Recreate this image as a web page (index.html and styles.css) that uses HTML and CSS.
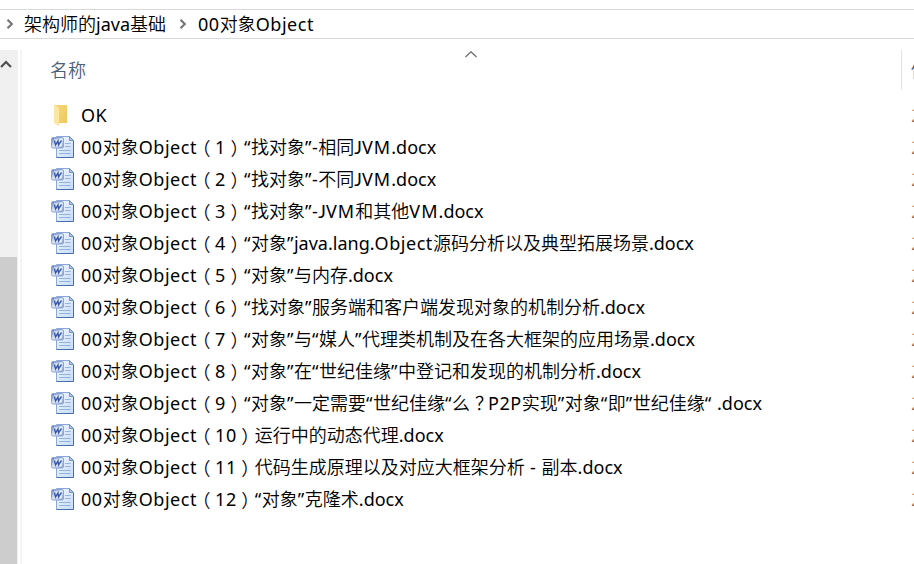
FILE: index.html
```html
<!DOCTYPE html>
<html lang="zh-CN">
<head>
<meta charset="utf-8">
<title>00对象Object</title>
<link rel="stylesheet" href="styles.css">
</head>
<body>
<svg class="defs" width="0" height="0" aria-hidden="true">
  <defs>
    <linearGradient id="paper" x1="0" y1="0" x2="1" y2="1"><stop offset="0" stop-color="#f4f9ff"/><stop offset="1" stop-color="#c3dbf7"/></linearGradient>
    <linearGradient id="badge" x1="0" y1="0" x2="1" y2="1"><stop offset="0" stop-color="#5a78be"/><stop offset=".5" stop-color="#dbe6f7"/><stop offset="1" stop-color="#7893d2"/></linearGradient>
    <linearGradient id="gold" x1="0" y1="0" x2="1" y2="1"><stop offset="0" stop-color="#f6d67a"/><stop offset="1" stop-color="#eec95c"/></linearGradient>
    <symbol id="doc" viewBox="0 0 24 24">
      <path d="M5.500 1.500H18.500L22.500 5.500V22.500H5.500Z" fill="url(#paper)" stroke="#8ba8d2"/>
      <path d="M22.500 6V22.500H5.500" fill="none" stroke="#4a6fa5"/>
      <path d="M18.500 1.500V5.500H22.500Z" fill="#a9c7ec" stroke="#6688b8" stroke-width=".8"/>
      <path d="M14 8.500H19.500M14 11.500H19.500M8 15.500H19.500M8 18.500H19.500" stroke="#94b2dc"/>
      <rect x=".5" y="2.500" width="12" height="10.500" rx="1.500" fill="url(#badge)" stroke="#8da4d4"/>
      <path d="M3 4.500H11.500L10.500 11.500H2.500Z" fill="#edf3fc"/>
      <path d="M3.500 5.500L4.500 10L7 6L7.500 10L10.500 5.500" fill="none" stroke="#3c5cab" stroke-width="1.500"/>
    </symbol>
  </defs>
</svg>
<div class="window">
  <nav class="address">
    <svg class="sep" viewBox="0 0 8 10"><path d="M1.500 .8L5.800 5L1.500 9.200"/></svg>
    <span class="crumb first">架构师的<span>java</span>基础</span>
    <svg class="sep" viewBox="0 0 8 10"><path d="M1.500 .8L5.800 5L1.500 9.200"/></svg>
    <span class="crumb"><b>00</b>对象<b>Object</b></span>
  </nav>
  <div class="body">
    <div class="scrollbar">
      <svg class="up" viewBox="0 0 12 10"><path d="M1 8L6 3L11 8"/></svg>
      <div class="thumb"></div>
    </div>
    <main class="pane">
      <header class="head">
        <span class="name">名称</span>
        <svg class="sort" viewBox="0 0 12 7"><path d="M.5 6L6 .8L11.500 6"/></svg>
        <span class="date">修</span>
      </header>
      <ul class="files">
        <li><svg class="icon" viewBox="0 0 24 24"><path d="M3 2H16V20H3Z" fill="url(#gold)"/><path d="M3 2L8 5V23L3 20Z" fill="#fbe6a2"/></svg><span class="label"><b>OK</b></span><span class="date">2</span></li>
        <li><svg class="icon"><use href="#doc"/></svg><span class="label"><b>00</b>对象<b>Object</b><i>（</i><b>1</b><i>）</i><b>“</b>找对象<b>”-</b>相同<u>J</u><s>VM</s><span>.docx</span></span><span class="date">2</span></li>
        <li><svg class="icon"><use href="#doc"/></svg><span class="label"><b>00</b>对象<b>Object</b><i>（</i><b>2</b><i>）</i><b>“</b>找对象<b>”-</b>不同<u>J</u><s>VM</s><span>.docx</span></span><span class="date">2</span></li>
        <li><svg class="icon"><use href="#doc"/></svg><span class="label"><b>00</b>对象<b>Object</b><i>（</i><b>3</b><i>）</i><b>“</b>找对象<b>”-</b><u>J</u><s>VM</s>和其他<s>VM</s><span>.docx</span></span><span class="date">2</span></li>
        <li><svg class="icon"><use href="#doc"/></svg><span class="label"><b>00</b>对象<b>Object</b><i>（</i><b>4</b><i>）</i><b>“</b>对象<b>”</b><span>java.lang.</span><b>Object</b>源码分析以及典型拓展场景<span>.docx</span></span><span class="date">2</span></li>
        <li><svg class="icon"><use href="#doc"/></svg><span class="label"><b>00</b>对象<b>Object</b><i>（</i><b>5</b><i>）</i><b>“</b>对象<b>”</b>与内存<span>.docx</span></span><span class="date">2</span></li>
        <li><svg class="icon"><use href="#doc"/></svg><span class="label"><b>00</b>对象<b>Object</b><i>（</i><b>6</b><i>）</i><b>“</b>找对象<b>”</b>服务端和客户端发现对象的机制分析<span>.docx</span></span><span class="date">2</span></li>
        <li><svg class="icon"><use href="#doc"/></svg><span class="label"><b>00</b>对象<b>Object</b><i>（</i><b>7</b><i>）</i><b>“</b>对象<b>”</b>与<b>“</b>媒人<b>”</b>代理类机制及在各大框架的应用场景<span>.docx</span></span><span class="date">2</span></li>
        <li><svg class="icon"><use href="#doc"/></svg><span class="label"><b>00</b>对象<b>Object</b><i>（</i><b>8</b><i>）</i><b>“</b>对象<b>”</b>在<b>“</b>世纪佳缘<b>”</b>中登记和发现的机制分析<span>.docx</span></span><span class="date">2</span></li>
        <li><svg class="icon"><use href="#doc"/></svg><span class="label"><b>00</b>对象<b>Object</b><i>（</i><b>9</b><i>）</i><b>“</b>对象<b>”</b>一定需要<b>“</b>世纪佳缘<b>“</b>么<em>？</em><b>P2P</b>实现<b>”</b>对象<b>“</b>即<b>”</b>世纪佳缘<b>“ </b><span>.docx</span></span><span class="date">2</span></li>
        <li><svg class="icon"><use href="#doc"/></svg><span class="label"><b>00</b>对象<b>Object</b><i>（</i><b>10</b><i>）</i>运行中的动态代理<span>.docx</span></span><span class="date">2</span></li>
        <li><svg class="icon"><use href="#doc"/></svg><span class="label"><b>00</b>对象<b>Object</b><i>（</i><b>11</b><i>）</i>代码生成原理以及对应大框架分析<b> - </b>副本<span>.docx</span></span><span class="date">2</span></li>
        <li><svg class="icon"><use href="#doc"/></svg><span class="label"><b>00</b>对象<b>Object</b><i>（</i><b>12</b><i>）</i><b>“</b>对象<b>”</b>克隆术<span>.docx</span></span><span class="date">2</span></li>
      </ul>
    </main>
  </div>
</div>
</body>
</html>
```
FILE: styles.css
```css
* { box-sizing: border-box; }
body {
  margin: 0;
  background: #fff;
  color: #000;
  font: 350 18px/32px "Noto Sans", "Noto Sans CJK SC", sans-serif;
}
.defs { position: absolute; }
.window { width: 914px; height: 564px; display: flex; flex-direction: column; overflow: hidden; padding-top: 9px; }
.address {
  height: 30px;
  flex: none;
  display: flex;
  align-items: center;
  border-top: 1px solid #d9d9d9;
  border-bottom: 1px solid #d9d9d9;
  padding-left: 6px;
  white-space: nowrap;
}
.sep { width: 8px; height: 10px; fill: none; stroke: #777; stroke-width: 2.2; flex: none; }
.crumb { margin-left: 10px; line-height: 28px; }
.first { width: 144px; margin-right: 11px; }
.crumb:last-child { margin-left: 11px; }
.body { flex: 1; min-height: 0; display: flex; margin-top: 11px; }
.scrollbar { width: 18px; background: #f0f0f0; flex: none; display: flex; flex-direction: column; }
.up { width: 12px; height: 10px; margin: 9px 0 188px; fill: none; stroke: #505050; stroke-width: 2.2; flex: none; }
.thumb { flex: 1; background: #cdcdcd; width: 17px; }
.pane { flex: 1; min-width: 0; margin-left: 2px; border-left: 2px solid #f5f5f5; overflow: hidden; }
.head { height: 40px; display: flex; color: #4c607a; line-height: 41px; white-space: nowrap; }
.head > * { flex: none; }
.name { width: 443px; padding-left: 28px; }
.sort { width: 12px; height: 7px; margin-top: 1px; margin-right: 424px; fill: none; stroke: #666; stroke-width: 1.2; }
.head .date { border-left: 1px solid #e2e2e2; padding-left: 9px; }
.files { list-style: none; margin: 9px 0 0; padding: 0 0 0 29px; }
.files li { height: 32px; display: flex; align-items: center; white-space: nowrap; }
.icon { width: 24px; height: 24px; flex: none; }
.label { width: 830px; flex: none; margin-left: 6px; }
.files .date { color: #8a6a55; }

/* Latin runs and character spacing inside file names */
.label span, .crumb span, b, s, u { font-weight: 400; }
b { letter-spacing: .55px; }
s { text-decoration: none; letter-spacing: 1.1px; }
u { text-decoration: none; font-family: Lato, sans-serif; }
i {
  font-style: normal;
  font-family: "Noto Sans CJK SC", sans-serif;
  font-feature-settings: "halt";
  display: inline-block;
  width: 18px;
  height: 32px;
  text-align: center;
  vertical-align: top;
}
em { font-style: normal; display: inline-block; transform: translateX(5px); }
```
